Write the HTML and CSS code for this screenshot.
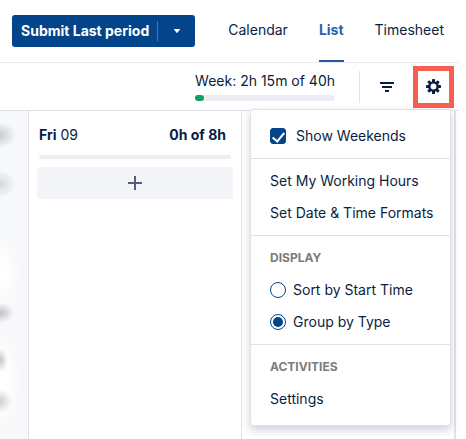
FILE: index.html
```html
<!DOCTYPE html>
<html lang="en">
<head>
  <meta charset="UTF-8" />
  <meta name="viewport" content="width=device-width, initial-scale=1.0" />
  <title>Timesheet - List</title>
  <link rel="stylesheet" href="styles.css">
</head>
<body>
  <div class="page">
    <header class="topbar">
      <div class="submit-group">
        <button type="button" class="submit-btn">Submit Last period</button>
        <button type="button" class="submit-more" aria-label="More periods">
          <svg width="6" height="4" viewBox="0 0 6 4"><path d="M0.5 0h5a.4.4 0 0 1 .3.7L3.4 3.7a.5.5 0 0 1-.8 0L.2.7A.4.4 0 0 1 .5 0z" fill="currentColor"/></svg>
        </button>
      </div>
      <nav class="tabs">
        <a href="#" class="tab">Calendar</a>
        <a href="#" class="tab active">List</a>
        <a href="#" class="tab">Timesheet</a>
      </nav>
    </header>

    <div class="toolbar">
      <div class="week">
        <div class="week-label">Week: 2h 15m of 40h</div>
        <div class="week-bar"><div class="week-fill"></div></div>
      </div>
      <div class="divider"></div>
      <button type="button" class="icon-btn" aria-label="Filter">
        <svg width="14" height="10" viewBox="0 0 14 10"><path d="M0 0h14v2H0zM2 4h10v2H2zM5 8h4v2H5z" fill="currentColor"/></svg>
      </button>
      <div class="settings">
        <button type="button" class="settings-btn" aria-label="Settings">
          <svg width="15" height="15" viewBox="0 0 14 14">
            <g fill="currentColor">
              <rect x="5.6" y="0" width="2.8" height="14" rx="0.8"/>
              <rect x="5.6" y="0" width="2.8" height="14" rx="0.8" transform="rotate(45 7 7)"/>
              <rect x="5.6" y="0" width="2.8" height="14" rx="0.8" transform="rotate(90 7 7)"/>
              <rect x="5.6" y="0" width="2.8" height="14" rx="0.8" transform="rotate(135 7 7)"/>
              <circle cx="7" cy="7" r="5"/>
            </g>
            <circle cx="7" cy="7" r="2.7" fill="#fff"/>
          </svg>
        </button>

        <div class="menu">
          <div class="menu-section first">
            <label class="menu-row check-row"><input type="checkbox" class="check" checked> Show Weekends</label>
          </div>
          <div class="menu-section">
            <a href="#" class="menu-row">Set My Working Hours</a>
            <a href="#" class="menu-row">Set Date &amp; Time Formats</a>
          </div>
          <div class="menu-section">
            <div class="menu-row menu-title">DISPLAY</div>
            <label class="menu-row"><input type="radio" name="display" class="radio"> Sort by Start Time</label>
            <label class="menu-row"><input type="radio" name="display" class="radio" checked> Group by Type</label>
          </div>
          <div class="menu-section last">
            <div class="menu-row menu-title">ACTIVITIES</div>
            <a href="#" class="menu-row">Settings</a>
          </div>
        </div>
      </div>
    </div>

    <main class="board">
      <div class="day-prev"></div>
      <section class="day">
        <div class="day-head">
          <span><strong>Fri</strong> 09</span>
          <strong>0h of 8h</strong>
        </div>
        <div class="day-bar"></div>
        <button type="button" class="add-btn" aria-label="Add entry">
          <svg width="14" height="14" viewBox="0 0 14 14"><path d="M6 0h2v6h6v2H8v6H6V8H0V6h6z" fill="currentColor"/></svg>
        </button>
      </section>
      <section class="day"></section>
    </main>
  </div>
</body>
</html>
```

FILE: styles.css
```css
* {
  box-sizing: border-box;
}

body {
  margin: 0;
  font-family: Inter, "Liberation Sans", sans-serif;
  font-size: 14px;
  line-height: 20px;
  color: #091e42;
  background-color: #fff;
}

button {
  font: inherit;
  color: inherit;
  border: none;
  background: none;
  padding: 0;
  cursor: pointer;
}

a {
  color: inherit;
  text-decoration: none;
}

svg {
  display: block;
}

.page {
  display: flex;
  flex-direction: column;
  min-height: 100vh;
  padding-right: 7px;
}

/* top bar */

.topbar {
  display: flex;
  justify-content: space-between;
  height: 63px;
  padding: 0 15px 0 12px;
  border-bottom: 1px solid #ebecf0;
}

.submit-group {
  display: flex;
  align-items: center;
  align-self: center;
  height: 32px;
  color: #fff;
  background-color: #04448a;
  border-radius: 3px;
}

.submit-btn {
  padding: 0 8px 0 9px;
  font-weight: 700;
  white-space: nowrap;
}

.submit-more {
  display: flex;
  align-items: center;
  justify-content: center;
  width: 38px;
  height: 20px;
  border-left: 1px solid #4377ab;
}

.tabs {
  display: flex;
  gap: 31px;
}

.tab {
  display: flex;
  align-items: center;
  border-bottom: 2px solid transparent;
}

.tab.active {
  font-weight: 700;
  color: #2a63ad;
  border-bottom-color: #2559a0;
}

/* toolbar */

.toolbar {
  display: flex;
  align-items: center;
  justify-content: flex-end;
  height: 48px;
  padding-right: 5px;
  border-bottom: 1px solid #dfe1e6;
}

.week {
  margin-bottom: 2px;
}

.week-label {
  margin-bottom: 4px;
}

.week-bar {
  height: 6px;
  border-radius: 3px;
  background-color: #ebeef2;
}

.week-fill {
  width: 6%;
  height: 6px;
  border-radius: 3px;
  background-color: #12a164;
}

.divider {
  width: 1px;
  height: 32px;
  margin: 0 11px 0 24px;
  background-color: #dfe1e6;
}

.icon-btn {
  display: flex;
  align-items: center;
  justify-content: center;
  width: 32px;
  height: 32px;
  margin-right: 10px;
}

.settings {
  position: relative;
}

.settings-btn {
  display: flex;
  align-items: center;
  justify-content: center;
  width: 41px;
  height: 42px;
  border: 5px solid #f95d50;
}

/* settings menu */

.menu {
  position: absolute;
  top: 43px;
  right: 3px;
  z-index: 10;
  width: 201px;
  background-color: #fff;
  border: 1px solid #dfe1e6;
  border-radius: 3px;
  box-shadow: 0 4px 8px rgba(9, 30, 66, 0.2);
}

.menu-section {
  padding: 6px 0;
  border-bottom: 1px solid #dfe1e6;
}

.menu-section.first {
  padding: 10px 0 6px;
}

.menu-section.last {
  padding-bottom: 10px;
  border-bottom: none;
}

.menu-row {
  display: flex;
  align-items: center;
  gap: 7px;
  height: 32px;
  padding: 0 19px;
  white-space: nowrap;
}

.menu-row.check-row {
  gap: 10px;
}

.menu-title {
  font-size: 12px;
  font-weight: 700;
  color: #7a7c80;
}

.check,
.radio {
  appearance: none;
  flex: none;
  width: 16px;
  height: 16px;
  margin: 0;
  border: 1px solid #04448a;
}

.check {
  display: flex;
  justify-content: center;
  border-radius: 3px;
}

.check:checked {
  background-color: #04448a;
}

.check:checked::before {
  content: "";
  width: 5px;
  height: 10px;
  margin-top: 1px;
  border: solid #fff;
  border-width: 0 2px 2px 0;
  transform: rotate(40deg);
}

.radio {
  display: flex;
  align-items: center;
  justify-content: center;
  border-radius: 50%;
}

.radio:checked::before {
  content: "";
  width: 10px;
  height: 10px;
  border-radius: 50%;
  background-color: #04448a;
}

/* day columns */

.board {
  display: flex;
  flex: 1;
  margin-right: 3px;
  border-right: 2px solid #e2e3ea;
}

/* faded out previous day */
.day-prev {
  width: 28px;
  background-color: #f7f8fa;
  background-image:
    radial-gradient(ellipse 16px 13px at 0 24px, #c8cacd, transparent),
    radial-gradient(ellipse 16px 14px at 0 73px, #d5d7db, transparent),
    radial-gradient(ellipse 14px 10px at 0 202px, #bfc0c2, transparent),
    radial-gradient(ellipse 8px 12px at 0 249px, #c3c5c7, transparent),
    radial-gradient(ellipse 12px 12px at 0 290px, #ccced0, transparent),
    radial-gradient(ellipse 22px 38px at 0 163px, #fff 20%, transparent),
    radial-gradient(ellipse 22px 54px at 0 268px, #fff 20%, transparent);
}

.day {
  flex: 1;
  padding: 14px 8px;
  border-left: 1px solid #dfe1e6;
}

.day-head {
  display: flex;
  justify-content: space-between;
  padding: 0 7px 0 2px;
}

.day-head strong {
  font-weight: 700;
}

.day-bar {
  height: 4px;
  margin: 10px 2px 8px;
  border-radius: 2px;
  background-color: #eceef0;
}

.add-btn {
  display: flex;
  align-items: center;
  justify-content: center;
  width: 100%;
  height: 32px;
  color: #505f79;
  background-color: #f3f4f8;
  border-radius: 3px;
}
```
